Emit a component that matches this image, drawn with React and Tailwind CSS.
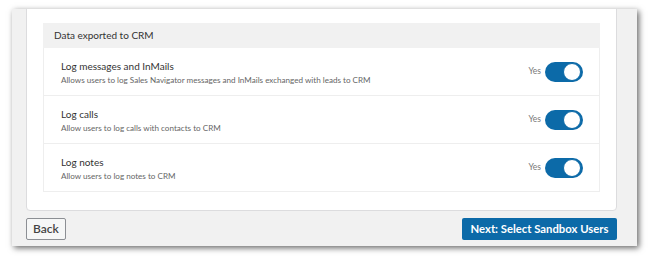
import React from 'react'

const settings = [
  { title: 'Log messages and InMails', desc: 'Allows users to log Sales Navigator messages and InMails exchanged with leads to CRM' },
  { title: 'Log calls', desc: 'Allow users to log calls with contacts to CRM' },
  { title: 'Log notes', desc: 'Allow users to log notes to CRM' },
]

const Toggle = () => (
  <div className="flex items-center gap-[4px]">
    <span className="text-[8.5px] text-[#777]">Yes</span>
    <div className="w-[38px] h-[20px] rounded-full bg-[#0c6aa8] flex items-center justify-end pr-[2px]">
      <div className="w-[18px] h-[18px] rounded-full bg-white border-[1.5px] border-[#0c6aa8]"></div>
    </div>
  </div>
)

const App = () => {
  return (
    <div className="w-[650px] h-[256px] bg-white pt-[9px] pl-[12px] font-['Lato',sans-serif]">
      <div className="w-[625px] h-[237px] bg-[#f1f1f1] overflow-hidden pl-[14px] shadow-[2px_2px_6px_rgba(0,0,0,0.6)]">
        {/* settings card */}
        <div className="w-[591px] -mt-[10px] h-[212px] bg-white border border-[#dcdcde] rounded-[4px] pt-[23px] px-[16px]">
          <div className="h-[25px] bg-[#f1f1f1] flex items-center px-[11px] text-[10px] text-[#333]">Data exported to CRM</div>
          {settings.map((item, index) => (
            <div key={index} className="h-[48px] border-x border-b border-[#eeeeee] flex items-center justify-between pl-[17px] pr-[16px]">
              <div className="flex flex-col pt-[1px]">
                <p className="text-[10px] leading-[15px] text-[#333]">{item.title}</p>
                <p className="text-[8.1px] leading-[12px] text-[#666]">{item.desc}</p>
              </div>
              <Toggle />
            </div>
          ))}
        </div>

        {/* footer buttons */}
        <div className="w-[591px] flex items-center justify-between mt-[7px]">
          <button className="h-[22px] w-[40px] border border-[#8c8f94] rounded-[2px] bg-[#f6f7f7] text-[12px] font-semibold text-[#444] flex items-center justify-center">Back</button>
          <button className="h-[22px] w-[155px] bg-[#0c6aa8] rounded-[2px] text-[11.3px] font-bold text-white whitespace-nowrap flex items-center justify-center">Next: Select Sandbox Users</button>
        </div>
      </div>
    </div>
  )
}

export default App
